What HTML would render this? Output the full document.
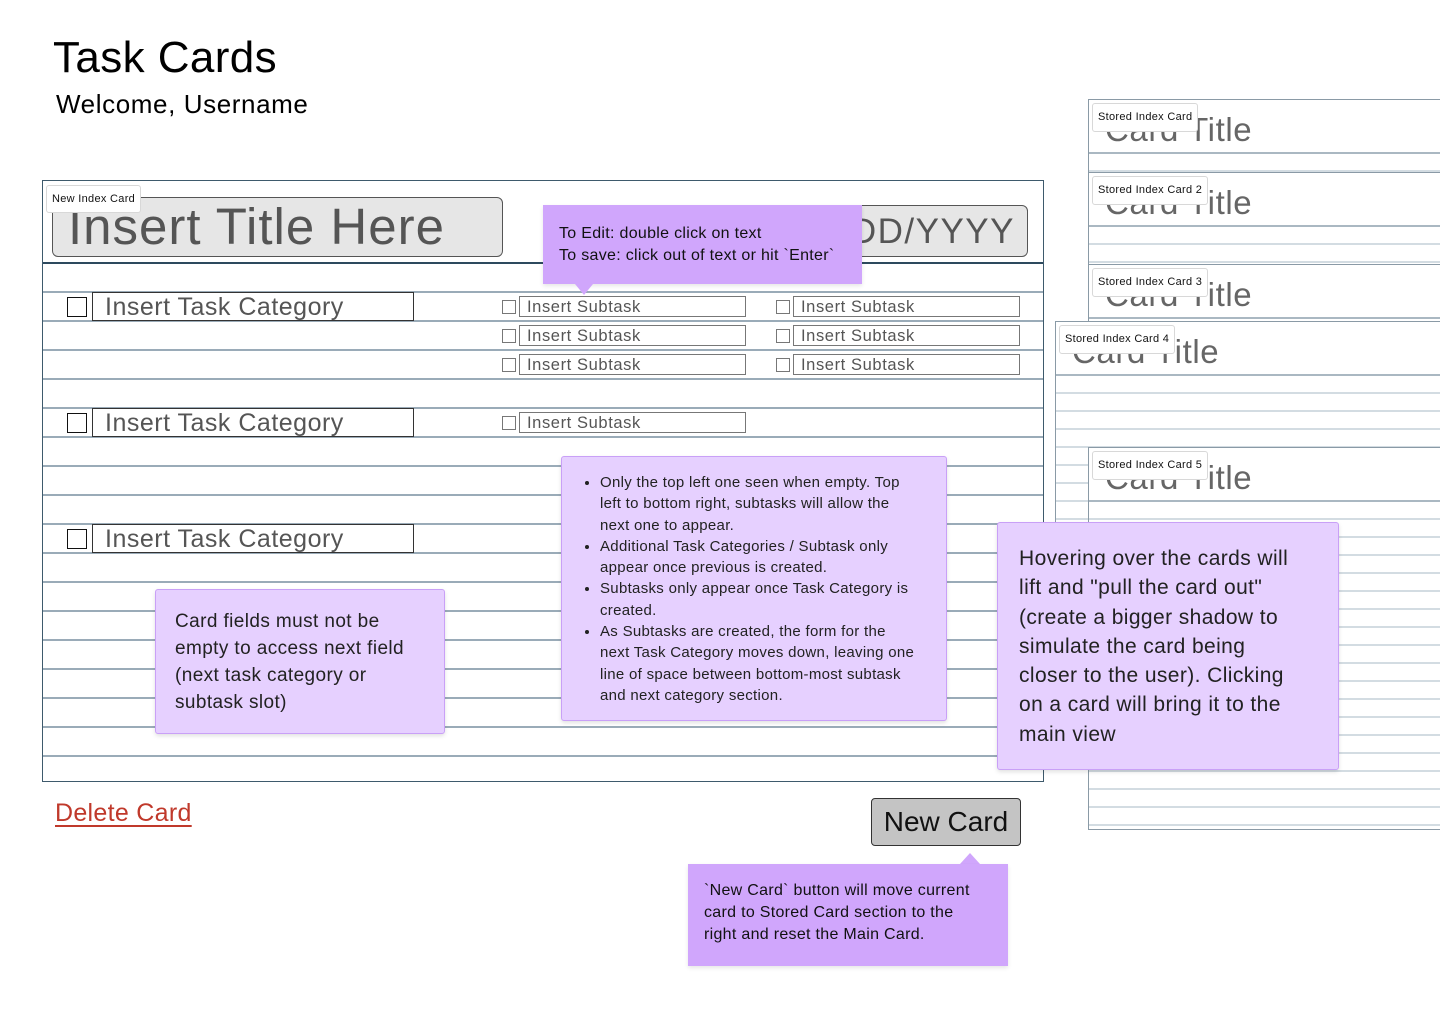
<!DOCTYPE html>
<html><head><meta charset="utf-8"><style>
*{box-sizing:border-box;margin:0;padding:0}
body{width:1440px;height:1024px;background:#fff;font-family:"Liberation Sans",sans-serif;position:relative;overflow:hidden;color:#111}
.a{position:absolute}
.lbl{position:absolute;background:#fff;border:1px solid #d8d8d8;border-radius:3px;font-size:11px;letter-spacing:.3px;color:#111;padding:0 5px;line-height:27px;white-space:nowrap}
.cb{position:absolute;width:20px;height:20px;border:1.5px solid #111;background:#fff}
.cat{position:absolute;width:322px;height:29px;border:1px solid #333;font-size:25px;letter-spacing:.5px;color:#555;padding-left:12px;line-height:29px;background:#fff;white-space:nowrap}
.scb{position:absolute;width:14px;height:14px;border:1px solid #777;background:#fff}
.st{position:absolute;width:227px;height:21px;border:1px solid #777;font-size:16.5px;letter-spacing:.6px;color:#555;padding-left:7px;line-height:20px;background:#fff;white-space:nowrap}
.sc{position:absolute;background:#fff;border:1px solid #8a9aa6;border-right:none;width:400px;overflow:hidden}
.sc .t{position:absolute;left:16px;top:11px;font-size:33px;letter-spacing:.6px;color:#666}
.sc .ln{position:absolute;left:0;right:0;top:52px;bottom:0;border-top:2px solid #aab8c2;background:repeating-linear-gradient(to bottom,transparent 0 16px,#d3dce2 16px 18px)}
.lp{position:absolute;background:#e6d0ff;border:1.5px solid #c9a0f7;border-radius:3px;box-shadow:0 2px 4px rgba(0,0,0,.12);color:#222;white-space:nowrap}
.dp{position:absolute;background:#d0a6fc;color:#111;box-shadow:0 2px 4px rgba(0,0,0,.1);white-space:nowrap}
</style></head><body>
<div class="a" style="left:53px;top:33px;font-size:44px;letter-spacing:.4px;color:#000">Task Cards</div>
<div class="a" style="left:56px;top:89px;font-size:26px;letter-spacing:.6px;color:#000">Welcome, Username</div>

<div class="a" style="left:42px;top:180px;width:1002px;height:602px;border:1px solid #3e5a6c;background:#fff">
  <div class="a" style="left:0;right:0;top:81px;height:2px;background:#2d4a5e"></div>
  <div class="a" style="left:0;right:0;top:83px;bottom:0;background:repeating-linear-gradient(to bottom,transparent 0 27px,#9aabb8 27px 29px)"></div>
</div>
<div class="a" style="left:52px;top:197px;width:451px;height:60px;background:#e6e6e6;border:1px solid #555;border-radius:6px;font-size:51px;letter-spacing:1px;color:#555;padding-left:15px;line-height:58px;white-space:nowrap;overflow:hidden">Insert Title Here</div>
<div class="a" style="left:740px;top:205px;width:288px;height:52px;background:#e6e6e6;border:1px solid #555;border-radius:6px;font-size:35px;letter-spacing:1.5px;color:#555;text-align:right;padding-right:12px;line-height:52px;white-space:nowrap">MM/DD/YYYY</div>
<div class="lbl" style="left:46px;top:185px;line-height:26px">New Index Card</div>

<div class="cb" style="left:67px;top:297px"></div><div class="cat" style="left:92px;top:292px">Insert Task Category</div>
<div class="cb" style="left:67px;top:413px"></div><div class="cat" style="left:92px;top:408px">Insert Task Category</div>
<div class="cb" style="left:67px;top:529px"></div><div class="cat" style="left:92px;top:524px">Insert Task Category</div>

<div class="scb" style="left:502px;top:300px"></div><div class="st" style="left:519px;top:296px">Insert Subtask</div>
<div class="scb" style="left:502px;top:329px"></div><div class="st" style="left:519px;top:325px">Insert Subtask</div>
<div class="scb" style="left:502px;top:358px"></div><div class="st" style="left:519px;top:354px">Insert Subtask</div>
<div class="scb" style="left:776px;top:300px"></div><div class="st" style="left:793px;top:296px">Insert Subtask</div>
<div class="scb" style="left:776px;top:329px"></div><div class="st" style="left:793px;top:325px">Insert Subtask</div>
<div class="scb" style="left:776px;top:358px"></div><div class="st" style="left:793px;top:354px">Insert Subtask</div>
<div class="scb" style="left:502px;top:416px"></div><div class="st" style="left:519px;top:412px">Insert Subtask</div>

<div class="dp" style="left:543px;top:205px;width:319px;height:79px;padding:18px 0 0 16px;font-size:16px;letter-spacing:.3px;line-height:22px">To Edit: double click on text<br>To save: click out of text or hit `Enter`</div>
<div class="a" style="left:575px;top:284px;width:0;height:0;border-left:9px solid transparent;border-right:9px solid transparent;border-top:11px solid #d0a6fc"></div>

<div class="sc" style="left:1088px;top:99px;height:90px"><div class="t">Card Title</div><div class="ln"></div></div>
<div class="lbl" style="left:1092px;top:103px">Stored Index Card</div>
<div class="sc" style="left:1088px;top:172px;height:110px"><div class="t">Card Title</div><div class="ln"></div></div>
<div class="lbl" style="left:1092px;top:176px">Stored Index Card 2</div>
<div class="sc" style="left:1088px;top:264px;height:110px"><div class="t">Card Title</div><div class="ln"></div></div>
<div class="lbl" style="left:1092px;top:268px">Stored Index Card 3</div>
<div class="sc" style="left:1055px;top:321px;height:382px;width:400px"><div class="t">Card Title</div><div class="ln"></div></div>
<div class="lbl" style="left:1059px;top:325px">Stored Index Card 4</div>
<div class="sc" style="left:1088px;top:447px;height:383px;border-bottom:1px solid #8a9aa6"><div class="t">Card Title</div><div class="ln"></div></div>
<div class="lbl" style="left:1092px;top:451px">Stored Index Card 5</div>

<div class="lp" style="left:155px;top:589px;width:290px;height:145px;padding:18px 0 0 19px;font-size:19px;letter-spacing:.4px;line-height:27px">Card fields must not be<br>empty to access next field<br>(next task category or<br>subtask slot)</div>
<div class="lp" style="left:561px;top:456px;width:386px;height:265px;padding:15px 0 0 20px;font-size:15px;letter-spacing:.3px;line-height:21.3px">
<ul style="padding-left:18px">
<li>Only the top left one seen when empty. Top<br>left to bottom right, subtasks will allow the<br>next one to appear.</li>
<li>Additional Task Categories / Subtask only<br>appear once previous is created.</li>
<li>Subtasks only appear once Task Category is<br>created.</li>
<li>As Subtasks are created, the form for the<br>next Task Category moves down, leaving one<br>line of space between bottom-most subtask<br>and next category section.</li>
</ul></div>
<div class="lp" style="left:997px;top:522px;width:342px;height:248px;padding:21px 0 0 21px;font-size:21px;letter-spacing:.4px;line-height:29.3px">Hovering over the cards will<br>lift and "pull the card out"<br>(create a bigger shadow to<br>simulate the card being<br>closer to the user). Clicking<br>on a card will bring it to the<br>main view</div>

<div class="a" style="left:55px;top:799px;font-size:25px;letter-spacing:.3px;color:#c0392b;text-decoration:underline;text-underline-offset:4px">Delete Card</div>
<div class="a" style="left:871px;top:798px;width:150px;height:48px;background:#c4c4c4;border:1px solid #333;border-radius:4px;font-size:28px;text-align:center;line-height:46px;color:#111">New Card</div>
<div class="a" style="left:960px;top:853px;width:0;height:0;border-left:10px solid transparent;border-right:10px solid transparent;border-bottom:11px solid #d0a6fc"></div>
<div class="dp" style="left:688px;top:864px;width:320px;height:102px;padding:16px 0 0 16px;font-size:16px;letter-spacing:.3px;line-height:22px">`New Card` button will move current<br>card to Stored Card section to the<br>right and reset the Main Card.</div>
</body></html>
